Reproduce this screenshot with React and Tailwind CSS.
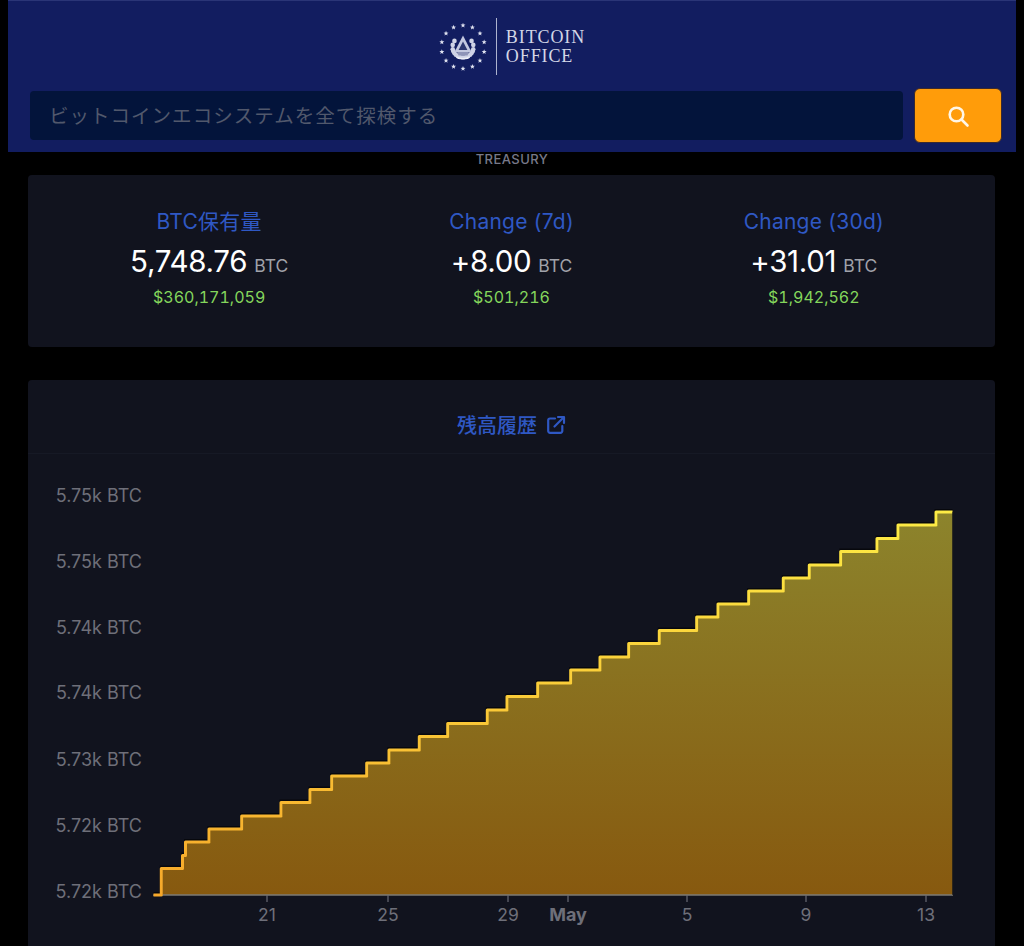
import React from "react";

const pts = [[153.5,895],[161.3,895],[161.3,868.5],[182.5,868.5],[182.5,855.5],[185.5,855.5],[185.5,842],[209,842],[209,829],[241.7,829],[241.7,816],[281,816],[281,802.5],[310,802.5],[310,789.5],[331.7,789.5],[331.7,776],[366.7,776],[366.7,763],[389,763],[389,750],[419.3,750],[419.3,736.5],[447.7,736.5],[447.7,723.5],[487.3,723.5],[487.3,710],[507,710],[507,696.5],[537.7,696.5],[537.7,683],[570.7,683],[570.7,670],[600,670],[600,657],[628.7,657],[628.7,643.5],[659.3,643.5],[659.3,630.5],[696.7,630.5],[696.7,617],[718,617],[718,604],[748.7,604],[748.7,591],[783.3,591],[783.3,578],[809.3,578],[809.3,565],[840.7,565],[840.7,551.5],[877,551.5],[877,538.5],[898,538.5],[898,525],[936,525],[936,512],[952.5,512]];
const OFFSET = 380;
const line = pts.map(([x, y], i) => `${i ? "L" : "M"}${x - 28} ${y - OFFSET}`).join(" ");
const area = `${line} L${952.5 - 28} ${895 - OFFSET} L${153.5 - 28} ${895 - OFFSET} Z`;
const yLabels = [["5.75k BTC",496],["5.75k BTC",562],["5.74k BTC",628],["5.74k BTC",693],["5.73k BTC",760],["5.72k BTC",826],["5.72k BTC",892]];
const xTicks = [["21",267],["25",388],["29",508],["May",568,true],["5",687],["9",806],["13",926]];
const sans = "font-['Inter','Liberation_Sans','Noto_Sans_CJK_JP',sans-serif]";

function Star({ x, y }) {
  const p = [];
  for (let i = 0; i < 10; i++) {
    const r = i % 2 ? 1.1 : 2.6;
    const a = -Math.PI / 2 + (i * Math.PI) / 5;
    p.push(`${x + r * Math.cos(a)},${y + r * Math.sin(a)}`);
  }
  return <polygon points={p.join(" ")} fill="#dfe2f0" />;
}

function Logo() {
  const stars = [];
  for (let i = 0; i < 14; i++) {
    const a = -Math.PI / 2 + (i * 2 * Math.PI) / 14;
    stars.push(<Star key={i} x={24 + 21.7 * Math.cos(a)} y={24 + 21.7 * Math.sin(a)} />);
  }
  const leaves = [];
  for (let i = 0; i < 9; i++) {
    const a = (Math.PI * (i - 1)) / 7.5 - 0.2;
    leaves.push(<circle key={"l" + i} cx={24 + 10.5 * Math.cos(a)} cy={24 + 10.5 * Math.sin(a)} r="2.300" fill="#cfd3e6" />);
    leaves.push(<circle key={"r" + i} cx={24 - 10.5 * Math.cos(a)} cy={24 + 10.5 * Math.sin(a)} r="2.300" fill="#cfd3e6" />);
  }
  return (
    <svg width="48" height="48" viewBox="0 0 48 48" className="block">
      {stars}
      {leaves}
      <path d="M24 12.500l8.500 16.500h-17z" fill="#c3c8df" />
      <path d="M24 18.500l4.400 8.500h-8.800z" fill="#2c376f" />
      <path d="M18 29h12l-1.500 3.500h-9z" fill="#8f95b8" />
      <path d="M17 33c4 2.500 10 2.500 14 0l-2 3h-10z" fill="#eceef6" />
    </svg>
  );
}

export default function App() {
  return (
    <div className={`bg-black h-[946px] overflow-hidden ${sans}`}>
      <header className="mx-2 h-[152px] bg-[#121d60] border-t border-[#2a3577] flex flex-col">
        <div className="h-[87px] flex items-start justify-center pt-[17px]">
          <div className="flex items-center">
            <div className="mt-[1px]"><Logo /></div>
            <div className="w-[1px] h-[57px] bg-[#aeb3cf] ml-[9px] mr-[9px]" />
            <div className="font-['Liberation_Serif',serif] text-[18px] leading-[19px] tracking-[0.9px] text-[#d3d6e6]">
              <div>BITCOIN</div>
              <div>OFFICE</div>
            </div>
          </div>
        </div>
        <div className="flex items-center gap-[11px] pl-[22px] pr-[14px]">
          <div className="flex-1 h-[49px] rounded bg-[#03143b] flex items-center pl-[19px] pb-[2px] text-[19.500px] tracking-[1.02px] text-[#51586c] font-['Noto_Sans_CJK_JP',sans-serif]">
            ビットコインエコシステムを全て探検する
          </div>
          <button className="w-[88px] h-[55px] rounded-md bg-[#ff9c0a] border border-[#3a2a30] flex items-center justify-center">
            <svg width="24" height="24" viewBox="0 0 24 24" fill="none" stroke="#fff6e6" strokeWidth="2.600" strokeLinecap="round">
              <circle cx="10.500" cy="10.500" r="6.800" />
              <path d="M15.500 15.500l6 6" />
            </svg>
          </button>
        </div>
      </header>

      <div className="h-[23px] flex justify-center text-[13px] leading-[15px] font-medium tracking-[0.45px] text-[#77798a]">
        TREASURY
      </div>

      <section className="ml-[28px] mr-[29px] h-[172px] bg-[#11131e] rounded px-[30px] pt-[33px] flex">
        {[
          ["BTC保有量", "5,748.76", "$360,171,059"],
          ["Change (7d)", "+8.00", "$501,216"],
          ["Change (30d)", "+31.01", "$1,942,562"],
        ].map(([label, val, usd]) => (
          <div key={label} className="flex-1 flex flex-col items-center">
            <div className="text-[21px] leading-[28px] tracking-[0.25px] text-[#2f58c4]">{label}</div>
            <div className="mt-[5px] h-[40px] flex items-baseline">
              <span className="text-[29.500px] leading-[40px] text-white tracking-[-0.3px]">{val}</span>
              <span className="ml-[7px] text-[17.500px] text-[#a0a2aa]">BTC</span>
            </div>
            <div className="mt-[4px] text-[16px] leading-[24px] tabular-nums text-[#84d65c]">{usd}</div>
          </div>
        ))}
      </section>

      <section className="ml-[28px] mr-[29px] mt-[33px] h-[600px] bg-[#11131e] rounded">
        <div className="h-[74px] border-b border-[#161925] flex items-start justify-center pt-[31px] gap-[9px] text-[#2f58c4] text-[20px] leading-[30px] font-medium">
          <span>残高履歴</span>
          <svg width="20" height="20" viewBox="0 0 20 20" fill="none" stroke="#2f58c4" strokeWidth="2.200" strokeLinecap="round" strokeLinejoin="round" className="mt-[4px]">
            <path d="M9 3.500H4a1.800 1.800 0 0 0-1.800 1.800V16a1.800 1.800 0 0 0 1.800 1.800h10.500a1.800 1.800 0 0 0 1.800-1.800v-5" />
            <path d="M8.500 11.500L17.500 2.500" />
            <path d="M12 2h6v6" />
          </svg>
        </div>
        <svg width="967" height="566" viewBox="0 0 967 566" className="block -mt-[74px]">
          <defs>
            <linearGradient id="fill" gradientUnits="userSpaceOnUse" x1="0" y1={512 - OFFSET} x2="0" y2={895 - OFFSET}>
              <stop offset="0" stopColor="#8c842c" />
              <stop offset="1" stopColor="#87590f" />
            </linearGradient>
            <linearGradient id="stroke" gradientUnits="userSpaceOnUse" x1="0" y1={512 - OFFSET} x2="0" y2={895 - OFFSET}>
              <stop offset="0" stopColor="#fdec45" />
              <stop offset="1" stopColor="#f7a82a" />
            </linearGradient>
          </defs>
          <path d={area} fill="url(#fill)" />
          <line x1={153 - 28} x2={953 - 28} y1={895 - OFFSET} y2={895 - OFFSET} stroke="#7d7b76" strokeWidth="1.600" />
          <path d={line} fill="none" stroke="#000" strokeOpacity="0.55" strokeWidth="3" transform="translate(0,-1.500)" />
          <path d={line} fill="none" stroke="url(#stroke)" strokeWidth="3" strokeLinejoin="round" />
          <line x1={952.7 - 28} x2={952.7 - 28} y1={512 - OFFSET} y2={895 - OFFSET} stroke="#1d1d1a" strokeWidth="0.800" />
          {xTicks.map(([t, x, bold]) => (
            <g key={t}>
              <line x1={x - 28} x2={x - 28} y1={895 - OFFSET} y2={902 - OFFSET} stroke="#6a6b74" strokeWidth="1.200" />
              <text x={x - 28} y={921 - OFFSET} textAnchor="middle" fontSize={bold ? 18 : 17.5} fontWeight={bold ? 700 : 400} fill="#6e6f79">{t}</text>
            </g>
          ))}
          {yLabels.map(([t, y], i) => (
            <text key={i} x={142 - 28} y={y + 6 - OFFSET} textAnchor="end" fontSize="18" fill="#6e6f79">{t}</text>
          ))}
        </svg>
      </section>
    </div>
  );
}
